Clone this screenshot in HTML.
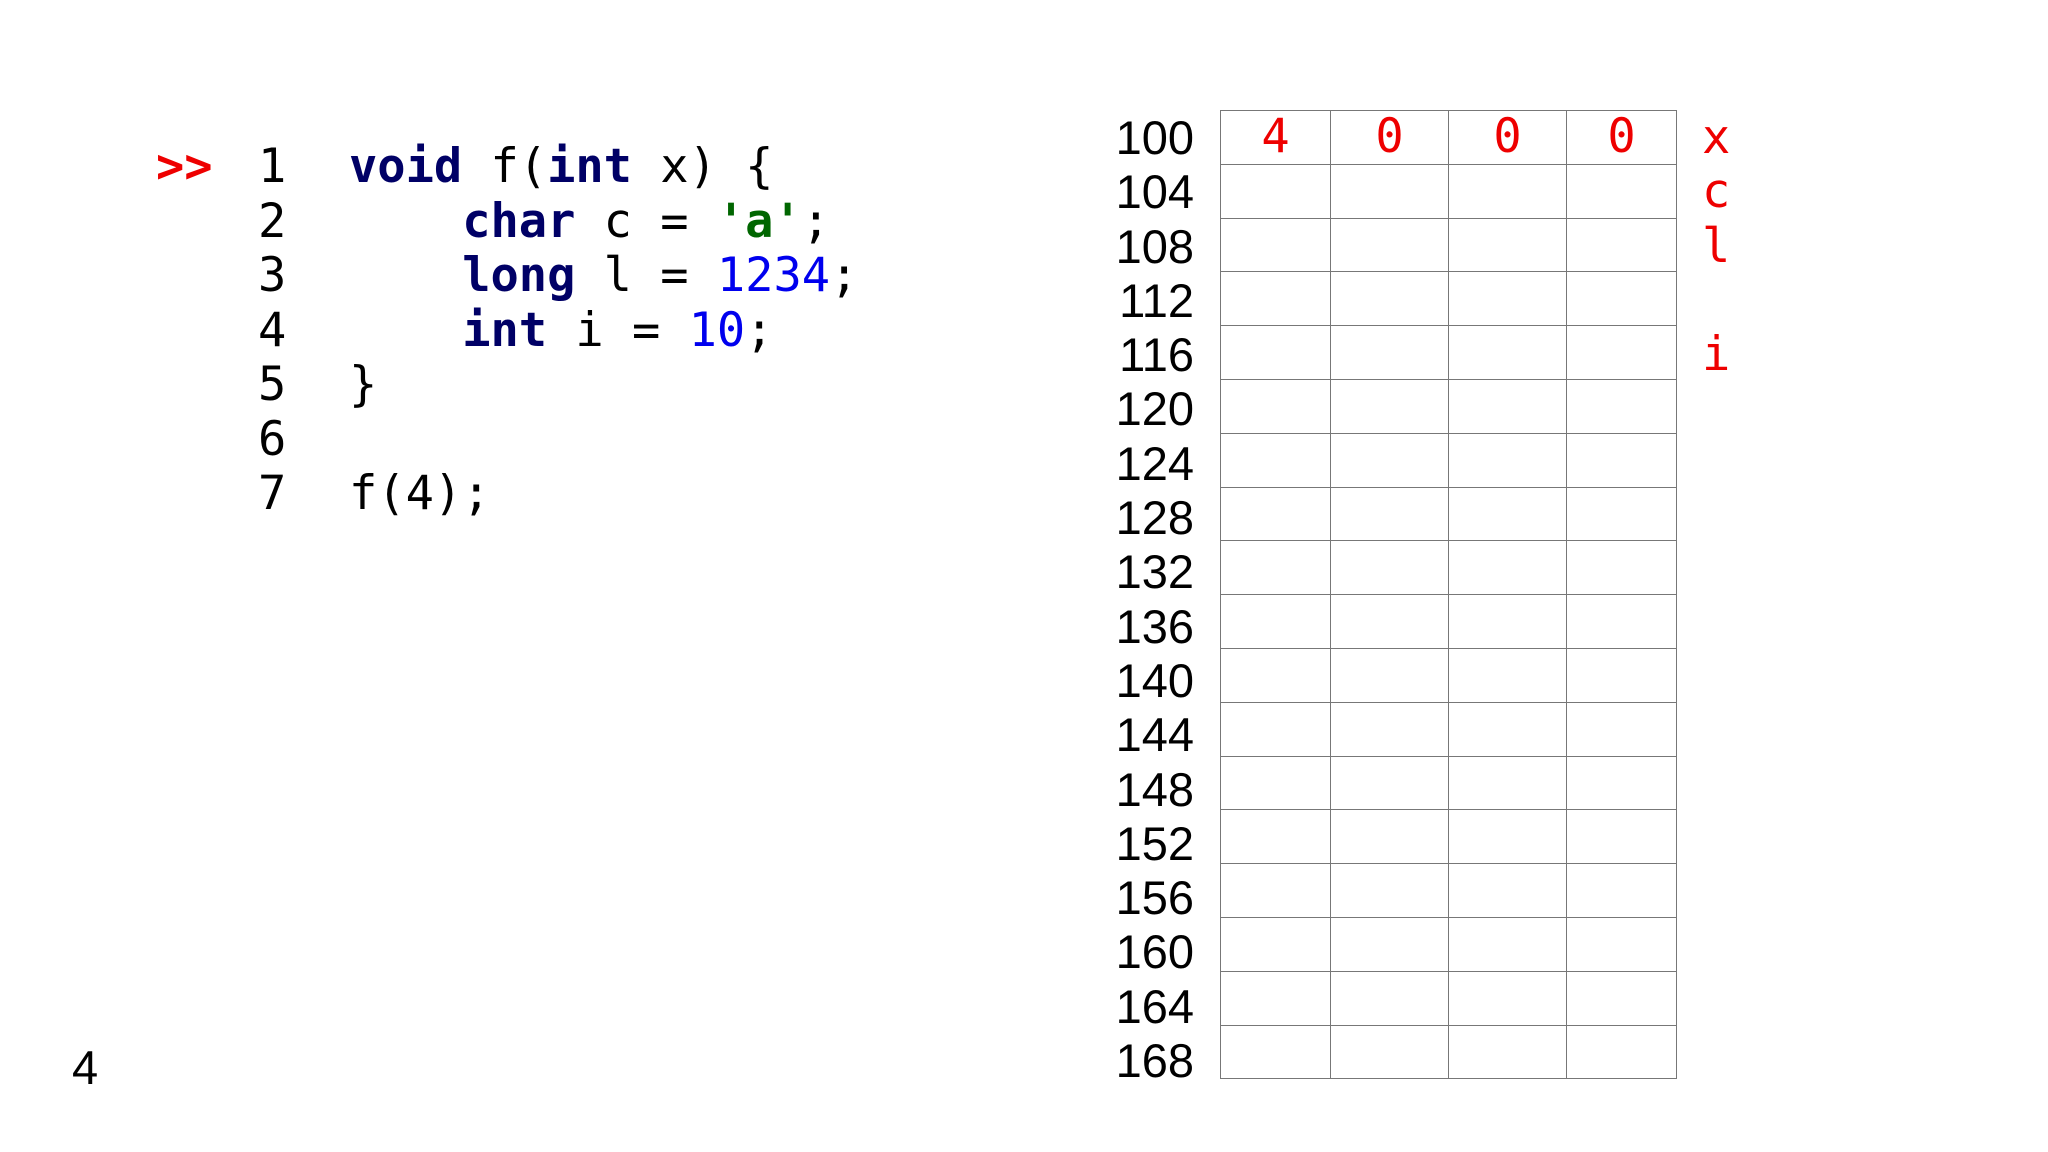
<!DOCTYPE html>
<html><head><meta charset="utf-8"><style>
html,body{margin:0;padding:0;background:#fff;width:2048px;height:1152px;overflow:hidden;position:relative}
.mono{font-family:"DejaVu Sans Mono","Liberation Mono",monospace;font-size:47px}
.sans{font-family:"Liberation Sans",sans-serif;font-size:47px}
.code{position:absolute;left:349px;top:140px;line-height:54.5px;white-space:pre;color:#000}
.nums{position:absolute;left:258px;top:140px;line-height:54.5px;white-space:pre;color:#000}
.kw{color:#000066;font-weight:bold}
.num{color:#0000ee}
.str{color:#006600;font-weight:bold}
.arrow{position:absolute;left:156px;top:140px;line-height:54.5px;color:#ee0000;font-weight:bold}
table{position:absolute;left:1220px;top:110px;border-collapse:collapse}
td{border:1.5px solid #777;height:52.8px;padding:0;text-align:center;color:#ee0000;font-family:"DejaVu Sans Mono",monospace;font-size:47px;line-height:52px}
.addr{position:absolute;left:1090px;width:104px;text-align:right;line-height:54.3px;top:111px}
.lbl{position:absolute;left:1702px;top:111px;line-height:54.3px;color:#ee0000;white-space:pre}
</style></head><body>
<div class="mono arrow">&gt;&gt;</div>
<div class="mono nums">1
2
3
4
5
6
7</div>
<div class="mono code"><span class="kw">void</span> f(<span class="kw">int</span> x) {
    <span class="kw">char</span> c = <span class="str">'a'</span>;
    <span class="kw">long</span> l = <span class="num">1234</span>;
    <span class="kw">int</span> i = <span class="num">10</span>;
}

f(4);</div>
<div class="sans" style="position:absolute;left:72px;top:1040px;">4</div>
<div class="sans addr">100<br>104<br>108<br>112<br>116<br>120<br>124<br>128<br>132<br>136<br>140<br>144<br>148<br>152<br>156<br>160<br>164<br>168</div>
<table>
<colgroup><col style="width:110px"><col style="width:118px"><col style="width:118px"><col style="width:110px"></colgroup>
<tr><td>4</td><td>0</td><td>0</td><td>0</td></tr>
<tr><td></td><td></td><td></td><td></td></tr>
<tr><td></td><td></td><td></td><td></td></tr>
<tr><td></td><td></td><td></td><td></td></tr>
<tr><td></td><td></td><td></td><td></td></tr>
<tr><td></td><td></td><td></td><td></td></tr>
<tr><td></td><td></td><td></td><td></td></tr>
<tr><td></td><td></td><td></td><td></td></tr>
<tr><td></td><td></td><td></td><td></td></tr>
<tr><td></td><td></td><td></td><td></td></tr>
<tr><td></td><td></td><td></td><td></td></tr>
<tr><td></td><td></td><td></td><td></td></tr>
<tr><td></td><td></td><td></td><td></td></tr>
<tr><td></td><td></td><td></td><td></td></tr>
<tr><td></td><td></td><td></td><td></td></tr>
<tr><td></td><td></td><td></td><td></td></tr>
<tr><td></td><td></td><td></td><td></td></tr>
<tr><td></td><td></td><td></td><td></td></tr>
</table>
<div class="mono lbl">x
c
l

i</div>
</body></html>
